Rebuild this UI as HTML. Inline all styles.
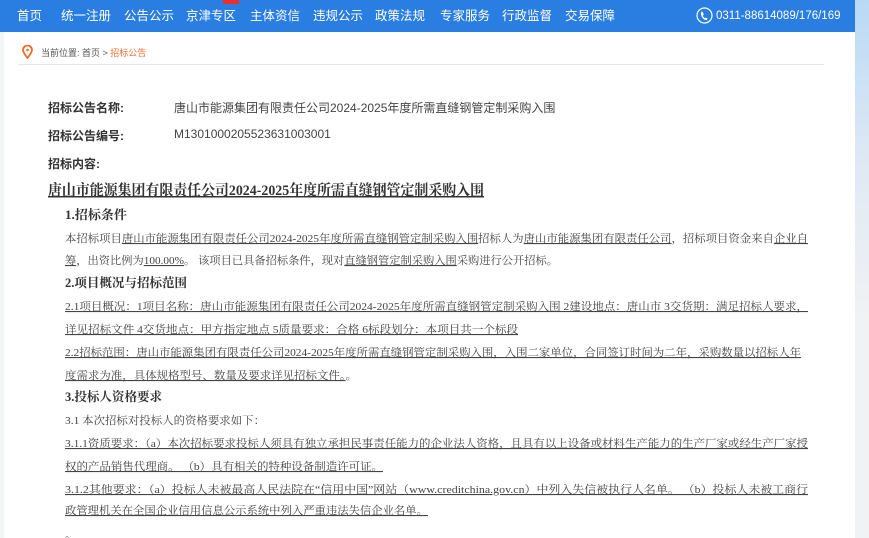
<!DOCTYPE html>
<html><head><meta charset="utf-8"><style>
html,body{margin:0;padding:0;width:869px;height:538px;overflow:hidden;background:#fff;font-family:"Liberation Sans","Noto Sans CJK SC",sans-serif}
.nav{position:absolute;left:0;top:0;width:855px;height:32px;background:#2a7de1}
.nav span{position:absolute;top:8px;color:#fff;font-size:12.5px;line-height:16px;white-space:nowrap}
.strip{position:absolute;left:855px;top:0;width:14px;height:538px;background:linear-gradient(#b9d9f6,#dfe9f4 30%,#f1f2f4 60%)}
.left{position:absolute;left:0;top:32px;width:4px;height:506px;background:#f4f5f7}
.hr{position:absolute;left:18px;top:64px;width:806px;height:1px;background:#e6e6e6}
.bc{position:absolute;top:46px;font-size:9px;color:#555;white-space:nowrap}
.lab{position:absolute;left:48px;font-size:12px;font-weight:bold;color:#333}
.val{position:absolute;left:174px;font-size:12px;color:#444;white-space:nowrap}
svg text{font-family:"Liberation Serif","Noto Serif CJK SC",serif}
</style></head><body>
<div class="nav">
<span style="left:17px">首页</span><span style="left:61px">统一注册</span><span style="left:124px">公告公示</span><span style="left:186px">京津专区</span><span style="left:250px">主体资信</span><span style="left:313px">违规公示</span><span style="left:375px">政策法规</span><span style="left:440px">专家服务</span><span style="left:502px">行政监督</span><span style="left:565px">交易保障</span>
<span style="left:716px;font-size:11.5px">0311-88614089/176/169</span>
</div>
<div style="position:absolute;left:223px;top:0;width:16px;height:4px;background:#e8302c"></div>
<svg style="position:absolute;left:696px;top:7px" width="17" height="17" viewBox="0 0 17 17"><circle cx="8.5" cy="8.5" r="7.5" fill="none" stroke="#fff" stroke-width="1.2"/><path d="M6 4.5c-1.5 1-1.5 3 0 5.5s3.5 3.5 5 3l.5-1.5-1.8-1-1 .6c-.8-.4-1.6-1.6-1.9-2.6l.9-.6-.5-2z" fill="#fff"/></svg>
<div class="strip"></div><div class="left"></div>
<svg style="position:absolute;left:22px;top:45px" width="11" height="14" viewBox="0 0 11 14"><path d="M5.5 13C2 8.5 1 6.8 1 5a4.5 4.5 0 0 1 9 0c0 1.8-1 3.5-4.5 8z" fill="none" stroke="#f06a2a" stroke-width="1.8"/><circle cx="5.5" cy="5" r="1.3" fill="#f06a2a"/></svg>
<span class="bc" style="left:41px">当前位置: 首页 &gt; <span style="color:#f0703a">招标公告</span></span>
<div class="hr"></div>
<div class="lab" style="top:99px">招标公告名称:</div><div class="val" style="top:99px">唐山市能源集团有限责任公司2024-2025年度所需直缝钢管定制采购入围</div>
<div class="lab" style="top:127px">招标公告编号:</div><div class="val" style="top:127px">M1301000205523631003001</div>
<div class="lab" style="top:155px">招标内容:</div>
<svg style="position:absolute;left:0;top:0" width="869" height="538">
<g fill="#444" font-size="11">
<text x="48" y="195" font-size="15" font-weight="bold" fill="#333" textLength="436" lengthAdjust="spacingAndGlyphs" text-decoration="underline">唐山市能源集团有限责任公司2024-2025年度所需直缝钢管定制采购入围</text>
<text x="65" y="219" font-size="12.5" font-weight="bold" fill="#333" textLength="62" lengthAdjust="spacingAndGlyphs">1.招标条件</text>
<text x="65" y="242" textLength="743" lengthAdjust="spacingAndGlyphs">本招标项目<tspan text-decoration="underline">唐山市能源集团有限责任公司2024-2025年度所需直缝钢管定制采购入围</tspan>招标人为<tspan text-decoration="underline">唐山市能源集团有限责任公司</tspan>，招标项目资金来自<tspan text-decoration="underline">企业自</tspan></text>
<text x="65" y="264" textLength="493" lengthAdjust="spacingAndGlyphs"><tspan text-decoration="underline">筹</tspan>，出资比例为<tspan text-decoration="underline">100.00%</tspan>。 该项目已具备招标条件，现对<tspan text-decoration="underline">直缝钢管定制采购入围</tspan>采购进行公开招标。</text>
<text x="65" y="287" font-size="12.5" font-weight="bold" fill="#333" textLength="122" lengthAdjust="spacingAndGlyphs">2.项目概况与招标范围</text>
<text x="65" y="310" textLength="743" lengthAdjust="spacingAndGlyphs" text-decoration="underline">2.1项目概况：1项目名称：唐山市能源集团有限责任公司2024-2025年度所需直缝钢管定制采购入围 2建设地点：唐山市 3交货期：满足招标人要求，</text>
<text x="65" y="333" textLength="453" lengthAdjust="spacingAndGlyphs" text-decoration="underline">详见招标文件 4交货地点：甲方指定地点 5质量要求：合格 6标段划分：本项目共一个标段</text>
<text x="65" y="356" textLength="736" lengthAdjust="spacingAndGlyphs" text-decoration="underline">2.2招标范围：唐山市能源集团有限责任公司2024-2025年度所需直缝钢管定制采购入围，入围二家单位，合同签订时间为二年，采购数量以招标人年</text>
<text x="65" y="379" textLength="292" lengthAdjust="spacingAndGlyphs"><tspan text-decoration="underline">度需求为准，具体规格型号、数量及要求详见招标文件。</tspan>。</text>
<text x="65" y="401" font-size="12.5" font-weight="bold" fill="#333" textLength="97" lengthAdjust="spacingAndGlyphs">3.投标人资格要求</text>
<text x="65" y="424" textLength="200" lengthAdjust="spacingAndGlyphs">3.1 本次招标对投标人的资格要求如下：</text>
<text x="65" y="447" textLength="743" lengthAdjust="spacingAndGlyphs" text-decoration="underline">3.1.1资质要求：（a）本次招标要求投标人须具有独立承担民事责任能力的企业法人资格，且具有以上设备或材料生产能力的生产厂家或经生产厂家授</text>
<text x="65" y="470" textLength="318" lengthAdjust="spacingAndGlyphs" text-decoration="underline">权的产品销售代理商。 （b）具有相关的特种设备制造许可证。</text>
<text x="65" y="493" textLength="743" lengthAdjust="spacingAndGlyphs" text-decoration="underline">3.1.2其他要求：（a）投标人未被最高人民法院在“信用中国”网站（www.creditchina.gov.cn）中列入失信被执行人名单。 （b）投标人未被工商行</text>
<text x="65" y="514" textLength="363" lengthAdjust="spacingAndGlyphs" text-decoration="underline">政管理机关在全国企业信用信息公示系统中列入严重违法失信企业名单。</text>
<text x="65" y="538">。</text>
</g></svg>
</body></html>
